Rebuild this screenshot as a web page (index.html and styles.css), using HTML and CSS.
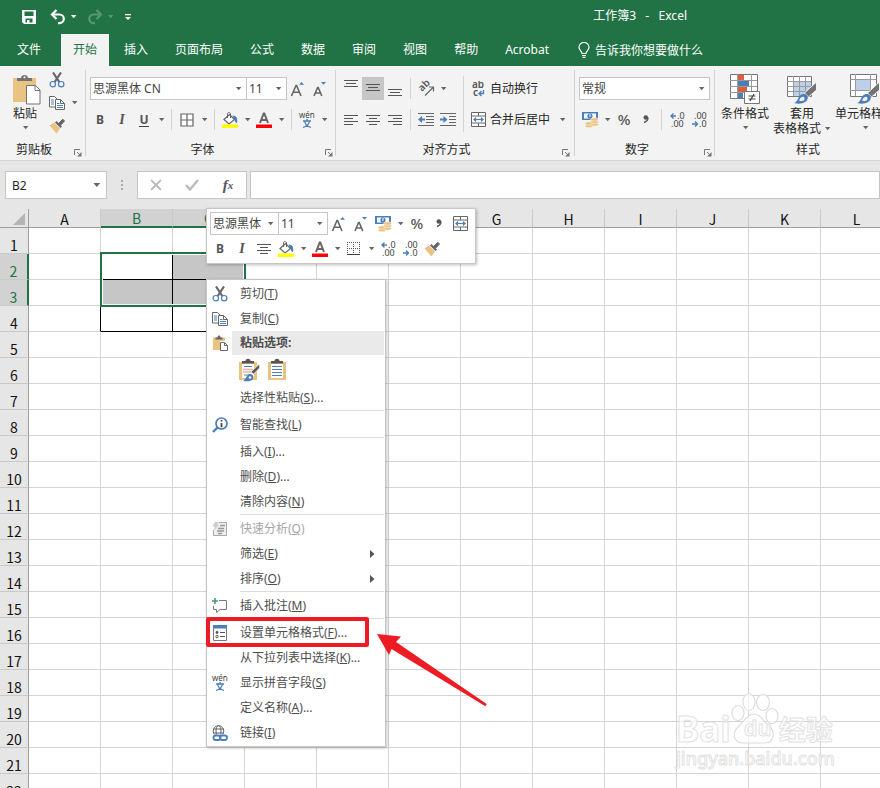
FILE: index.html
```html
<!DOCTYPE html>
<html lang="zh-CN">
<head>
<meta charset="utf-8">
<title>工作簿3 - Excel</title>
<link rel="stylesheet" href="styles.css">
</head>
<body>
<svg class="sprite" aria-hidden="true">
  <symbol id="i-caret" viewBox="0 0 7 4"><path d="M1 0h5.400L3.700 3.200z" fill="currentColor"/></symbol>
  <symbol id="i-save" viewBox="0 0 16 16"><path fill="#fff" fill-rule="evenodd" d="M1 1h14v14H3l-2-2zM3.500 2.500v4.500h9V2.500zM4.500 9.500V13.500H6V11h2.500v2.500h3v-4z"/></symbol>
  <symbol id="i-undo" viewBox="0 0 16 16"><path d="M2 5.500h7.500a4.300 4.300 0 0 1 0 8.600H8" fill="none" stroke="currentColor" stroke-width="2.200"/><path d="M6.500 1L2 5.500 6.500 10" fill="none" stroke="currentColor" stroke-width="2.200"/></symbol>
  <symbol id="i-redo" viewBox="0 0 16 16"><path d="M14 5.500H6.500a4.300 4.300 0 0 0 0 8.600H8" fill="none" stroke="currentColor" stroke-width="2.200"/><path d="M9.500 1L14 5.500 9.500 10" fill="none" stroke="currentColor" stroke-width="2.200"/></symbol>
  <symbol id="i-custom" viewBox="0 0 8 8"><path d="M1 1h6v1.300H1zM1 4h6L4 7z" fill="#fff"/></symbol>
  <symbol id="i-bulb" viewBox="0 0 12 16"><path d="M4 11.500C4 9 1 8.500 1 5.200a5 4.700 0 0 1 10 0C11 8.500 8 9 8 11.500zM4 13.500h4M4.500 15.400h3" fill="none" stroke="#fff" stroke-width="1.200"/></symbol>

  <symbol id="i-paste-big" viewBox="0 0 34 31"><path d="M5 4h23v7H18v17H5z" fill="#eac282"/><path d="M9 7V4h4c0-4 7-4 7 0h4v3z" fill="#737373"/><circle cx="16.500" cy="3.300" r="1.100" fill="#f3f3f3"/><path d="M18.500 11.500h9l4.500 4.500v14H18.500z" fill="#fff" stroke="#737373"/><path d="M27 11.500V16.500h5" fill="none" stroke="#737373"/></symbol>
  <symbol id="i-paste" viewBox="0 0 16 16"><path d="M1 2.500h12V6H8v9H1z" fill="#eac282"/><path d="M3.500 4.500V2.500h2c0-2.600 3-2.600 3 0h2v2z" fill="#666"/><path d="M8.500 7.500h4l3 3v5h-7z" fill="#fff" stroke="#666"/><path d="M12.500 7.500v3h3" fill="none" stroke="#666"/></symbol>
  <symbol id="i-cut" viewBox="0 0 16 16"><path d="M4 .500L10.300 10M12 .500L5.700 10" stroke="#666" stroke-width="2.200" fill="none"/><circle cx="3.800" cy="12.200" r="2.700" fill="none" stroke="#4a7ebb" stroke-width="1.200"/><circle cx="12.200" cy="12.200" r="2.700" fill="none" stroke="#4a7ebb" stroke-width="1.200"/></symbol>
  <symbol id="i-copy" viewBox="0 0 16 16"><path d="M.500 1.500h5L8 4v8H.500z" fill="#fff" stroke="#666"/><path d="M2 5h3M2 7h3M2 9h3" stroke="#4a7ebb"/><path d="M6.500 4.500h5l4 4v6h-9z" fill="#fff" stroke="#666"/><path d="M11.500 4.500v4h4" fill="none" stroke="#666"/><path d="M8 8.500h2.500M8 10.500h6M8 12.500h6" stroke="#4a7ebb"/></symbol>
  <symbol id="i-brush" viewBox="0 0 16 16"><path d="M.500 7.500L5 4.500l6 6-3.500 5z" fill="#eac282"/><path d="M6 4.500l1.500-1.500 5.500 5.500-1.500 1.500z" fill="#666"/><path d="M9.500 5.500L13.800 1.200 15.500 3 11.500 7.300z" fill="#666" stroke="#666"/></symbol>
  <symbol id="i-launch" viewBox="0 0 8 8"><path d="M.500 6V.500H6" fill="none" stroke="#777"/><path d="M3 3l3 3" stroke="#777"/><path d="M7.500 3v4.500H3z" fill="#777"/></symbol>
  <symbol id="i-grow" viewBox="0 0 16 16"><path d="M1.500 15L6 4.500h.6L11 15M3 11.300h6.600" fill="none" stroke="#666" stroke-width="1.600"/><path d="M9 3.800h5L11.500 1z" fill="#4a7ebb"/></symbol>
  <symbol id="i-shrink" viewBox="0 0 16 16"><path d="M2 15L5.600 6.500h.6L9.800 15M3.300 12h5.300" fill="none" stroke="#666" stroke-width="1.600"/><path d="M9 1h5L11.500 3.800z" fill="#4a7ebb"/></symbol>
  <symbol id="i-borders" viewBox="0 0 14 14"><path d="M1 1h12v12H1zM7 1v12M1 7h12" fill="#fff" stroke="#666" stroke-width="1.200"/></symbol>
  <symbol id="i-noborders" viewBox="0 0 14 14"><path d="M.500 0v12M6.500 0v12M12.500 0v12M0 .500h13M0 6.500h13" fill="none" stroke="#555" stroke-dasharray="1 1"/><path d="M0 12.500h13" stroke="#444"/></symbol>
  <symbol id="i-fill" viewBox="0 0 16 16"><path d="M2 7.500L7.500 2.500 12.500 7.500 7 12z" fill="#fff" stroke="#666" stroke-width="1.200"/><path d="M5.500 6V2c0-2 3-2 3 0v4" fill="none" stroke="#666"/><path d="M10.500 3.500c4 0 5.500 3 4.500 7.500-2 0-2-3-3.500-5z" fill="#4a7ebb"/><path d="M0 12.500h16V16H0z" fill="#ff0"/></symbol>
  <symbol id="i-color" viewBox="0 0 16 16"><path d="M4 11L7.700 1.500h.6L12 11M5.400 8h5.300" fill="none" stroke="#666" stroke-width="2"/><path d="M0 12.500h16V16H0z" fill="#f00"/></symbol>
  <symbol id="i-left" viewBox="0 0 14 14"><path d="M0 2.500h14M0 5.500h9M0 8.500h14M0 11.500h9" stroke="#555"/></symbol>
  <symbol id="i-center" viewBox="0 0 14 14"><path d="M0 2.500h14M3 5.500h8M0 8.500h14M3 11.500h8" stroke="#555"/></symbol>
  <symbol id="i-right" viewBox="0 0 14 14"><path d="M0 2.500h14M5 5.500h9M0 8.500h14M5 11.500h9" stroke="#555"/></symbol>
  <symbol id="i-top" viewBox="0 0 14 17"><path d="M0 .500h14M2 3.500h10M0 6.500h14" stroke="#555"/></symbol>
  <symbol id="i-middle" viewBox="0 0 14 17"><path d="M0 4.500h14M2 7.500h10M0 10.500h14" stroke="#555"/></symbol>
  <symbol id="i-bottom" viewBox="0 0 14 17"><path d="M0 9.500h14M2 12.500h10M0 15.500h14" stroke="#555"/></symbol>
  <symbol id="i-turn" viewBox="0 0 17 17"><path d="M7 15.500L15 7.500M11 7h4.500v4.500" fill="none" stroke="#666" stroke-width="1.200"/><text x="0" y="0" transform="translate(4 12) rotate(-45)" font-size="10" font-weight="600" fill="#555">ab</text></symbol>
  <symbol id="i-wrap" viewBox="0 0 16 16"><text x="1" y="7" font-size="10" font-weight="600" fill="#555">ab</text><text x="2" y="15" font-size="10" font-weight="600" fill="#555">c</text><path d="M12.500 9v3.500H8.500M10.500 10l-2.500 2.500 2.500 2.500" fill="none" stroke="#4a7ebb" stroke-width="1.300"/></symbol>
  <symbol id="i-merge" viewBox="0 0 16 16"><path d="M.500.500h14v14H.500zM.500 4h14M.500 11h14M7.500.500V4M7.500 11v3.500" fill="#fff" stroke="#666"/><path d="M3 7.500h9" stroke="#4a7ebb" stroke-width="1.200"/><path d="M2 7.500L5 5v5zM13 7.500L10 5v5z" fill="#4a7ebb"/></symbol>
  <symbol id="i-outdent" viewBox="0 0 16 16"><path d="M0 1.500h16M8 4.500h8M8 7.500h8M8 10.500h8M0 13.500h16" stroke="#666"/><path d="M0 7.500L4 4v2.500h3v2H4V11z" fill="#4a7ebb"/></symbol>
  <symbol id="i-indent" viewBox="0 0 16 16"><path d="M0 1.500h16M9 4.500h7M9 7.500h7M9 10.500h7M0 13.500h16" stroke="#666"/><path d="M7.500 7.500L3.500 4v2.500H0v2h3.500V11z" fill="#4a7ebb"/></symbol>
  <symbol id="i-wen" viewBox="0 0 18 18"><text x="1" y="7" font-size="8" fill="#444">wén</text><path d="M5 10h8M9 8v2M6.500 10c.5 3 3 5.500 6.500 6.500M11.500 10c-.5 3-3 5.500-6.500 6.500" fill="none" stroke="#4a7ebb" stroke-width="1.300"/></symbol>
  <symbol id="i-money" viewBox="0 0 17 16"><path d="M0 0h16v8H0z" fill="#4a7ebb"/><path d="M2 1.500h12v5H2z" fill="#fff"/><circle cx="8" cy="4" r="2.600" fill="#4a7ebb"/><path d="M8 2v3" stroke="#fff"/><g fill="#eac282" stroke="#f7efdf" stroke-width=".7"><ellipse cx="7" cy="14" rx="3.800" ry="1.700"/><ellipse cx="7" cy="11.500" rx="3.800" ry="1.700"/><ellipse cx="12.500" cy="12.500" rx="3.800" ry="1.700"/><ellipse cx="12.500" cy="10" rx="3.800" ry="1.700"/><ellipse cx="12.500" cy="7.500" rx="3.800" ry="1.700"/></g></symbol>
  <symbol id="i-comma" viewBox="0 0 8 12"><circle cx="3.800" cy="3.500" r="2.300" fill="#555"/><path d="M6 3.500C6 6 5 7.500 2 8.500" fill="none" stroke="#555" stroke-width="1.400"/></symbol>
  <symbol id="i-incdec" viewBox="0 0 16 16"><text x="8" y="7" font-size="9" fill="#444">.0</text><text x="2" y="15" font-size="9" fill="#444">.00</text><path d="M7 4H2M4.500 1.500L2 4l2.500 2.500" fill="none" stroke="#4a7ebb" stroke-width="1.400"/></symbol>
  <symbol id="i-decdec" viewBox="0 0 16 16"><text x="3" y="7" font-size="9" fill="#444">.00</text><text x="8" y="15" font-size="9" fill="#444">.0</text><path d="M1 12h5.500M4 9.500L6.500 12 4 14.500" fill="none" stroke="#4a7ebb" stroke-width="1.400"/></symbol>
  <symbol id="i-cond" viewBox="0 0 30 31"><path d="M.500.500h27v24H.500z" fill="#fff" stroke="#777"/><path d="M7.500 0v24M21.500 0v24M0 6.500h27M0 12.500h27M0 18.500h27" stroke="#999"/><path d="M8 1h6v5H8zM8 13h9v5H8z" fill="#d8613c"/><path d="M8 7h11v5H8zM8 19h5v5H8z" fill="#4a7ebb"/><path d="M14.500 17.500h15v12h-15z" fill="#fff" stroke="#777"/><path d="M18.500 22h7M18.500 25h7M24 20l-4 7" stroke="#444" stroke-width="1.200"/></symbol>
  <symbol id="i-tstyle" viewBox="0 0 30 31"><path d="M.500 2.500h24v20H.500z" fill="#fff" stroke="#777"/><path d="M7 8h17v14H7z" fill="#bdd0e9"/><path d="M6.500 2v20M12.500 2v20M18.500 2v20M0 7.500h24M0 12.500h24M0 17.500h24" stroke="#999"/><use href="#i-pen"/></symbol>
  <symbol id="i-cstyle" viewBox="0 0 30 31"><path d="M.500.500h26v22H.500z" fill="#fff" stroke="#777"/><path d="M5.500 0v22M20.500 0v22M0 5.500h26M0 16.500h26" stroke="#999"/><path d="M6 6h14v10H6z" fill="#bdd0e9"/><use href="#i-pen"/></symbol>
  <g id="i-pen"><path d="M29.500 8v8l-8 7-4-4z" fill="#737373" stroke="#f3f3f3"/><path d="M7 29c4 0 4-9 9-9 6-.5 6 6 2 8-3 2-7 2-11 1z" fill="#4a7ebb"/><path d="M12.500 25.500c1.500-3.500 5-3.500 5-1s-2 2.500-5 2.500z" fill="#f3f3f3"/></g>

  <symbol id="i-keep" viewBox="0 0 22 24"><path d="M1 4h18v18H1z" fill="#eac282"/><path d="M4 6h12v14H4z" fill="#fff"/><path d="M4 5.500V3h3.500C7.500 0 12.500 0 12.500 3H16v2.500z" fill="#555"/><path d="M6 8.500h8M6 17h5" stroke="#4a7ebb"/><path d="M5.500 11.500h9M5.500 14h9" stroke="#d8613c" stroke-width="1.600" stroke-dasharray="1 1"/><path d="M21.500 6v4l-6 6-2.500-2z" fill="#555" stroke="#fff" stroke-width=".6"/><path d="M5 23c3-1 3.500-7 7-7s4.500 4 2 6c-2 1.500-5.500 1.500-9 1z" fill="#4a7ebb"/><circle cx="12" cy="19.500" r="1.300" fill="#fff"/></symbol>
  <symbol id="i-values" viewBox="0 0 22 24"><path d="M2 4h18v18H2z" fill="#eac282"/><path d="M5 6h12v14H5z" fill="#fff"/><path d="M5 5.500V3h3.500C8.500 0 13.500 0 13.500 3H17v2.500z" fill="#555"/><path d="M6 8.500h10M6 11.500h10M6 14.500h10M6 17.500h10" stroke="#4a7ebb"/></symbol>
  <symbol id="i-lookup" viewBox="0 0 16 16"><circle cx="9.500" cy="6.500" r="5.500" fill="#fff" stroke="#4a7ebb" stroke-width="1.700"/><path d="M5.500 10.500L1 15" stroke="#4a7ebb" stroke-width="2.400"/><path d="M9.500 3v1.600M9.500 6v4.200" stroke="#444" stroke-width="1.800"/></symbol>
  <symbol id="i-quick" viewBox="0 0 16 16"><path d="M7 1.500h7.500v13h-13V9" fill="#eee" stroke="#aaa"/><path d="M8 4.500h5M6 7.500h6M5 10h7M6 12.500h4" stroke="#999" stroke-width="1.500"/><path d="M3 1h4L5 4h2L1 10l2-4.500H.500z" fill="#ccc"/></symbol>
  <symbol id="i-note" viewBox="0 0 16 16"><path d="M7 2.500h7.500v9H8l-3.500 3v-3h-3V8" fill="none" stroke="#777"/><path d="M3 0v6M0 3h6" stroke="#4f9a78" stroke-width="1.600"/></symbol>
  <symbol id="i-format" viewBox="0 0 16 16"><path d="M1.500 1.500h13v14h-13z" fill="#fff" stroke="#777"/><path d="M1 0h14v3.500H1z" fill="#4a7ebb"/><path d="M8 7.500h5M8 11.500h5" stroke="#555"/><circle cx="5" cy="7.500" r="1.400" fill="#555"/><circle cx="5" cy="11.500" r="1.200" fill="#fff" stroke="#555"/></symbol>
  <symbol id="i-link" viewBox="0 0 16 16"><g fill="none" stroke="#666"><circle cx="6.500" cy="6" r="5.300"/><ellipse cx="6.500" cy="6" rx="2.500" ry="5.300"/><path d="M1 4h11M1 8h11"/></g><path d="M1 9.500h15V16H1z" fill="#fff"/><rect x="1.500" y="10.500" width="7" height="4.500" rx="2.200" fill="none" stroke="#4a7ebb" stroke-width="1.800"/><rect x="8" y="10.500" width="7" height="4.500" rx="2.200" fill="none" stroke="#4a7ebb" stroke-width="1.800"/></symbol>
  <symbol id="i-sub" viewBox="0 0 5 8"><path d="M0 0v8l4.500-4z" fill="#555"/></symbol>
  <symbol id="i-cancel" viewBox="0 0 14 14"><path d="M2 2l10 10M12 2L2 12" stroke="#bbb" stroke-width="1.800"/></symbol>
  <symbol id="i-check" viewBox="0 0 14 14"><path d="M1 7l4 4.500L13 2" fill="none" stroke="#bbb" stroke-width="2.400"/></symbol>
</svg>

<header class="top">
  <div class="titlebar">
    <div class="quick">
      <button class="tb" aria-label="保存"><svg width="16" height="16"><use href="#i-save"/></svg></button>
      <button class="tb split" aria-label="撤消"><svg width="16" height="16"><use href="#i-undo"/></svg><svg class="caret"><use href="#i-caret"/></svg></button>
      <button class="tb split" aria-label="恢复" disabled><svg width="16" height="16"><use href="#i-redo"/></svg><svg class="caret"><use href="#i-caret"/></svg></button>
      <button class="tb" aria-label="自定义"><svg width="8" height="8"><use href="#i-custom"/></svg></button>
    </div>
    <h1>工作簿3&nbsp;&nbsp; -&nbsp;&nbsp; Excel</h1>
  </div>
  <nav class="tabs">
    <button class="file">文件</button><button class="active">开始</button><button>插入</button><button>页面布局</button><button>公式</button><button>数据</button><button>审阅</button><button>视图</button><button>帮助</button><button>Acrobat</button>
    <button class="tell"><svg width="12" height="16"><use href="#i-bulb"/></svg>告诉我你想要做什么</button>
  </nav>
</header>

<section class="ribbon">
  <div class="group clipboard">
    <div class="tools">
      <button class="big"><svg width="34" height="31"><use href="#i-paste-big"/></svg><span>粘贴</span><svg class="caret"><use href="#i-caret"/></svg></button>
      <div class="stack">
        <div class="row"><button class="ic" aria-label="剪切"><svg width="16" height="16"><use href="#i-cut"/></svg></button></div>
        <div class="row"><button class="ic" aria-label="复制"><svg width="16" height="16"><use href="#i-copy"/></svg></button><button class="drop" aria-label="复制选项"><svg class="caret"><use href="#i-caret"/></svg></button></div>
        <div class="row"><button class="ic" aria-label="格式刷"><svg width="16" height="16"><use href="#i-brush"/></svg></button></div>
      </div>
    </div>
    <div class="caption">剪贴板<button class="launch" aria-label="剪贴板设置"><svg width="8" height="8"><use href="#i-launch"/></svg></button></div>
  </div>

  <div class="group font">
    <div class="rows">
      <div class="row first">
        <div class="combo wide"><select aria-label="字体"><option>思源黑体 CN</option></select><svg class="caret"><use href="#i-caret"/></svg></div>
        <div class="combo size"><select aria-label="字号"><option>11</option></select><svg class="caret"><use href="#i-caret"/></svg></div>
        <button class="ic" aria-label="增大字号"><svg width="16" height="16"><use href="#i-grow"/></svg></button>
        <button class="ic" aria-label="减小字号"><svg width="16" height="16"><use href="#i-shrink"/></svg></button>
      </div>
      <div class="row">
        <button class="ic"><b>B</b></button><button class="ic"><i>I</i></button><button class="ic"><b class="ul">U</b></button><button class="drop" aria-label="下划线"><svg class="caret"><use href="#i-caret"/></svg></button>
        <span class="sep"></span>
        <button class="ic" aria-label="边框"><svg width="14" height="14"><use href="#i-borders"/></svg></button><button class="drop" aria-label="边框选项"><svg class="caret"><use href="#i-caret"/></svg></button>
        <span class="sep"></span>
        <button class="ic" aria-label="填充颜色"><svg width="16" height="16"><use href="#i-fill"/></svg></button><button class="drop" aria-label="填充选项"><svg class="caret"><use href="#i-caret"/></svg></button>
        <button class="ic" aria-label="字体颜色"><svg width="16" height="16"><use href="#i-color"/></svg></button><button class="drop" aria-label="颜色选项"><svg class="caret"><use href="#i-caret"/></svg></button>
        <span class="sep"></span>
        <button class="ic" aria-label="拼音"><svg width="18" height="18"><use href="#i-wen"/></svg></button><button class="drop" aria-label="拼音选项"><svg class="caret"><use href="#i-caret"/></svg></button>
      </div>
    </div>
    <div class="caption">字体<button class="launch" aria-label="字体设置"><svg width="8" height="8"><use href="#i-launch"/></svg></button></div>
  </div>

  <div class="group align">
    <div class="cols">
      <div class="rows">
        <div class="row">
          <button class="ic" aria-label="顶端对齐"><svg width="14" height="17"><use href="#i-top"/></svg></button><button class="ic on" aria-label="垂直居中"><svg width="14" height="17"><use href="#i-middle"/></svg></button><button class="ic" aria-label="底端对齐"><svg width="14" height="17"><use href="#i-bottom"/></svg></button>
          <span class="sep"></span>
          <button class="ic" aria-label="方向"><svg width="17" height="17"><use href="#i-turn"/></svg></button><button class="drop" aria-label="方向选项"><svg class="caret"><use href="#i-caret"/></svg></button>
        </div>
        <div class="row">
          <button class="ic" aria-label="左对齐"><svg width="14" height="14"><use href="#i-left"/></svg></button><button class="ic" aria-label="居中"><svg width="14" height="14"><use href="#i-center"/></svg></button><button class="ic" aria-label="右对齐"><svg width="14" height="14"><use href="#i-right"/></svg></button>
          <span class="sep"></span>
          <button class="ic" aria-label="减少缩进"><svg width="16" height="16"><use href="#i-outdent"/></svg></button><button class="ic" aria-label="增加缩进"><svg width="16" height="16"><use href="#i-indent"/></svg></button>
        </div>
      </div>
      <span class="sep tall"></span>
      <div class="rows">
        <div class="row"><button class="text"><span class="ic"><svg width="16" height="16"><use href="#i-wrap"/></svg></span>自动换行</button></div>
        <div class="row"><button class="text"><span class="ic"><svg width="16" height="16"><use href="#i-merge"/></svg></span>合并后居中</button><button class="drop far" aria-label="合并选项"><svg class="caret"><use href="#i-caret"/></svg></button></div>
      </div>
    </div>
    <div class="caption">对齐方式<button class="launch" aria-label="对齐设置"><svg width="8" height="8"><use href="#i-launch"/></svg></button></div>
  </div>

  <div class="group number">
    <div class="rows">
      <div class="row"><div class="combo full"><select aria-label="数字格式"><option>常规</option></select><svg class="caret"><use href="#i-caret"/></svg></div></div>
      <div class="row">
        <button class="ic" aria-label="会计格式"><svg width="17" height="16"><use href="#i-money"/></svg></button><button class="drop" aria-label="会计选项"><svg class="caret"><use href="#i-caret"/></svg></button>
        <button class="ic pct">%</button><button class="ic" aria-label="千位分隔"><svg width="8" height="12"><use href="#i-comma"/></svg></button>
        <span class="sep"></span>
        <button class="ic" aria-label="增加小数位"><svg width="16" height="16"><use href="#i-incdec"/></svg></button><button class="ic" aria-label="减少小数位"><svg width="16" height="16"><use href="#i-decdec"/></svg></button>
      </div>
    </div>
    <div class="caption">数字<button class="launch" aria-label="数字设置"><svg width="8" height="8"><use href="#i-launch"/></svg></button></div>
  </div>

  <div class="group styles">
    <div class="tools">
      <button class="big"><svg width="30" height="31"><use href="#i-cond"/></svg><span>条件格式</span><svg class="caret"><use href="#i-caret"/></svg></button>
      <button class="big"><svg width="30" height="31"><use href="#i-tstyle"/></svg><span>套用</span><span class="line">表格格式<svg class="caret"><use href="#i-caret"/></svg></span></button>
      <button class="big"><svg width="30" height="31"><use href="#i-cstyle"/></svg><span>单元格样式</span><svg class="caret"><use href="#i-caret"/></svg></button>
    </div>
    <div class="caption center">样式</div>
  </div>
</section>

<section class="formula">
  <div class="namebox"><input aria-label="名称框" value="B2"><svg width="9" height="5" viewBox="0 0 7 4"><use href="#i-caret"/></svg></div>
  <span class="dots"></span>
  <div class="fxbox">
    <button aria-label="取消"><svg width="14" height="14"><use href="#i-cancel"/></svg></button>
    <button aria-label="输入"><svg width="14" height="14"><use href="#i-check"/></svg></button>
    <button class="fx">f<sub>x</sub></button>
  </div>
  <input class="edit" aria-label="编辑栏">
</section>

<main class="sheet">
  <table>
    <thead><tr id="heads"><th class="corner"><svg width="12" height="12" viewBox="0 0 12 12"><path d="M12 0v12H0z" fill="#b4b4b4"/></svg></th></tr></thead>
    <tbody id="cells"></tbody>
  </table>
</main>

<div class="mini">
  <div class="row first">
    <div class="combo mfont"><select aria-label="字体"><option>思源黑体</option></select><svg class="caret"><use href="#i-caret"/></svg></div>
    <div class="combo msize"><select aria-label="字号"><option>11</option></select><svg class="caret"><use href="#i-caret"/></svg></div>
    <button class="ic" aria-label="增大字号"><svg width="16" height="16"><use href="#i-grow"/></svg></button><button class="ic" aria-label="减小字号"><svg width="16" height="16"><use href="#i-shrink"/></svg></button>
    <button class="ic" aria-label="会计格式"><svg width="17" height="16"><use href="#i-money"/></svg></button><button class="drop" aria-label="会计选项"><svg class="caret"><use href="#i-caret"/></svg></button>
    <button class="ic pct">%</button><button class="ic" aria-label="千位分隔"><svg width="8" height="12"><use href="#i-comma"/></svg></button><button class="ic" aria-label="合并"><svg width="16" height="16"><use href="#i-merge"/></svg></button>
  </div>
  <div class="row">
    <button class="ic"><b>B</b></button><button class="ic"><i>I</i></button><button class="ic" aria-label="居中"><svg width="14" height="14"><use href="#i-center"/></svg></button>
    <button class="ic" aria-label="填充颜色"><svg width="16" height="16"><use href="#i-fill"/></svg></button><button class="drop" aria-label="填充选项"><svg class="caret"><use href="#i-caret"/></svg></button>
    <button class="ic" aria-label="字体颜色"><svg width="16" height="16"><use href="#i-color"/></svg></button><button class="drop" aria-label="颜色选项"><svg class="caret"><use href="#i-caret"/></svg></button>
    <button class="ic" aria-label="边框"><svg width="14" height="14"><use href="#i-noborders"/></svg></button><button class="drop" aria-label="边框选项"><svg class="caret"><use href="#i-caret"/></svg></button>
    <button class="ic" aria-label="增加小数位"><svg width="16" height="16"><use href="#i-incdec"/></svg></button><button class="ic" aria-label="减少小数位"><svg width="16" height="16"><use href="#i-decdec"/></svg></button><button class="ic" aria-label="格式刷"><svg width="16" height="16"><use href="#i-brush"/></svg></button>
  </div>
</div>

<div class="menu" role="menu">
  <button role="menuitem"><span class="mi"><svg width="16" height="16"><use href="#i-cut"/></svg></span>剪切(<u>T</u>)</button>
  <button role="menuitem"><span class="mi"><svg width="16" height="16"><use href="#i-copy"/></svg></span>复制(<u>C</u>)</button>
  <div class="heading"><span class="mi"><svg width="16" height="16"><use href="#i-paste"/></svg></span><strong>粘贴选项:</strong></div>
  <div class="pastes"><button aria-label="保留源格式"><svg width="22" height="24"><use href="#i-keep"/></svg></button><button aria-label="值"><svg width="22" height="24"><use href="#i-values"/></svg></button></div>
  <button role="menuitem"><span class="mi"></span>选择性粘贴(<u>S</u>)...</button>
  <hr>
  <button role="menuitem"><span class="mi"><svg width="16" height="16"><use href="#i-lookup"/></svg></span>智能查找(<u>L</u>)</button>
  <hr>
  <button role="menuitem"><span class="mi"></span>插入(<u>I</u>)...</button>
  <button role="menuitem"><span class="mi"></span>删除(<u>D</u>)...</button>
  <button role="menuitem"><span class="mi"></span>清除内容(<u>N</u>)</button>
  <hr>
  <button role="menuitem" disabled><span class="mi"><svg width="16" height="16"><use href="#i-quick"/></svg></span>快速分析(<u>Q</u>)</button>
  <button role="menuitem"><span class="mi"></span>筛选(<u>E</u>)<svg class="sub" width="5" height="8"><use href="#i-sub"/></svg></button>
  <button role="menuitem"><span class="mi"></span>排序(<u>O</u>)<svg class="sub" width="5" height="8"><use href="#i-sub"/></svg></button>
  <hr>
  <button role="menuitem"><span class="mi"><svg width="16" height="16"><use href="#i-note"/></svg></span>插入批注(<u>M</u>)</button>
  <hr>
  <button role="menuitem" class="marked"><span class="mi"><svg width="16" height="16"><use href="#i-format"/></svg></span>设置单元格格式(<u>F</u>)...</button>
  <button role="menuitem"><span class="mi"></span>从下拉列表中选择(<u>K</u>)...</button>
  <button role="menuitem"><span class="mi"><svg width="18" height="18"><use href="#i-wen"/></svg></span>显示拼音字段(<u>S</u>)</button>
  <button role="menuitem"><span class="mi"></span>定义名称(<u>A</u>)...</button>
  <button role="menuitem"><span class="mi"><svg width="16" height="16"><use href="#i-link"/></svg></span>链接(<u>I</u>)</button>
</div>

<svg class="arrow" width="112" height="76" viewBox="0 0 112 76"><path d="M1 3L25 5.500 20 11 110 72.500Q111.500 74 109 75L15.500 18 13 24z" fill="#ed1c24"/></svg>

<div class="watermark">
  <div class="brand"><span class="bai">Bai</span><span class="paw"><svg width="48" height="52" viewBox="0 0 48 52"><g fill="#fff" fill-opacity=".7" stroke="#ddd" stroke-width="1.200"><ellipse cx="7" cy="21" rx="6" ry="7.500"/><ellipse cx="18" cy="10" rx="6" ry="8.500"/><ellipse cx="32" cy="10.500" rx="6.500" ry="8"/><ellipse cx="41" cy="24" rx="6" ry="7.500"/><path d="M23 22c7 0 9 7 14 11 9 7 5 18-3 18H12c-9 0-12-10-4-17 6-5 8-12 15-12z"/></g></svg><span class="du">du</span></span><span class="jy">经验</span></div>
  <div class="url">jingyan.baidu.com</div>
</div>
<script src="script.js"></script>
</body>
</html>
```
FILE: styles.css
```css
*, *::before, *::after { box-sizing: border-box; }

body {
  margin: 0;
  position: relative;
  height: 100vh;
  overflow: hidden;
  display: flex;
  flex-direction: column;
  background: #fff;
  color: #262626;
  font: 12px/15px "Noto Sans", "Noto Sans CJK SC", sans-serif;
}

button, input, select {
  font: inherit;
  color: inherit;
  border: 0;
  padding: 0;
  margin: 0;
  background: none;
  outline: 0;
  border-radius: 0;
}

button { white-space: nowrap; }
svg { display: block; flex: none; }
.sprite { display: none; }
.caret { width: 7px; height: 4px; color: #666; }

/* Title bar and tabs */
.top { background: #217346; color: #fff; flex: none; }
.titlebar { display: flex; align-items: center; justify-content: space-between; height: 34px; padding: 0 193px 0 21px; }
.titlebar h1 { margin: 0; padding-bottom: 4px; font-size: 12px; font-weight: 400; }
.quick { display: flex; align-items: center; gap: 10px; }
.quick .tb { display: flex; align-items: center; gap: 4px; }
.quick .tb:first-child { margin-right: 3px; }
.quick .caret { color: #fff; }
.quick .split:disabled { opacity: .25; color: #fff; }
.tabs { display: flex; gap: 3px; height: 32px; padding-left: 5px; }
.tabs button { padding: 0 12px 2px; }
.tabs .file { margin-right: 5px; }
.tabs .active { background: #f3f3f3; color: #217346; }
.tabs .tell { display: flex; align-items: center; gap: 5px; padding: 0 14px; }

/* Ribbon */
.ribbon { display: flex; flex: none; height: 95px; background: #f3f3f3; border-bottom: 1px solid #d2d2d2; overflow: hidden; }
.group { position: relative; display: flex; flex-direction: column; justify-content: space-between; flex: none; padding-bottom: 2px; }
.group::after { content: ""; position: absolute; right: 0; top: 4px; bottom: 4px; width: 1px; background: #d2d2d2; }
.clipboard { padding-left: 8px; padding-right: 6px; }
.font { padding-left: 3px; padding-right: 5px; }
.align { padding-left: 4px; padding-right: 7px; }
.number { padding-left: 4px; padding-right: 5px; }
.styles { padding-left: 6px; padding-right: 7px; }
.caption { position: relative; text-align: center; padding-right: 15px; line-height: 16px; }
.clipboard .caption { padding-right: 20px; }
.caption.center { padding-right: 0; }
.launch { position: absolute; right: -2px; bottom: 1px; }
.tools { display: flex; gap: 4px; }
.stack { display: flex; flex-direction: column; padding-top: 2px; }
.rows { display: flex; flex-direction: column; gap: 8px; padding-top: 11px; }
.cols { display: flex; }
.row { display: flex; align-items: center; height: 23px; }
.font .first, .mini .first { padding-left: 1px; }
.ic { display: flex; align-items: center; justify-content: center; width: 22px; height: 23px; flex: none; color: #555; }
.ic b, .ic i { font-size: 12px; font-weight: 700; line-height: 15px; }
.ic i { font-family: "Liberation Serif", serif; font-size: 14px; }
.ic .ul { border-bottom: 1px solid #444; line-height: 13px; }
.ic.on { background: #c6c6c6; }
.pct { font-size: 15px; font-weight: 500; }
.drop { display: flex; align-items: center; justify-content: center; width: 12px; height: 23px; flex: none; }
.drop.far { margin-left: 6px; }
.sep { width: 1px; height: 21px; margin: 0 4px; background: #d2d2d2; flex: none; }
.sep.tall { height: 56px; margin-top: 10px; }
.text { display: flex; align-items: center; }
.big { display: flex; flex-direction: column; align-items: center; padding-top: 8px; }
.big span { line-height: 15px; }
.big > svg:first-child { margin-bottom: 1px; }
.big > .caret { margin-top: 5px; }
.big .line { display: flex; align-items: center; gap: 3px; }

.combo { position: relative; display: flex; height: 23px; background: #fff; border: 1px solid #c6c6c6; flex: none; }
.combo select { width: 100%; padding: 0 12px 0 2px; appearance: none; color: #444; }
.combo .caret { position: absolute; right: 4px; top: 9px; pointer-events: none; }
.wide { width: 157px; }
.size { width: 41px; margin-left: -1px; }
.full { width: 131px; }

/* Formula bar */
.formula { display: flex; align-items: center; flex: none; height: 48px; padding-left: 5px; background: #e6e6e6; }
.namebox, .fxbox, .edit { height: 28px; background: #fff; border: 1px solid #c6c6c6; }
.namebox { display: flex; align-items: center; width: 102px; padding: 0 5px 0 6px; color: #666; }
.namebox input { width: 100%; color: #262626; }
.dots { width: 2px; height: 11px; margin: 0 14px; background: repeating-linear-gradient(#aaa 0 2px, transparent 2px 4px); }
.fxbox { display: flex; width: 110px; }
.fxbox button { display: flex; align-items: center; justify-content: center; flex: 1; }
.fxbox .fx { font: italic 700 15px/15px "Liberation Serif", serif; color: #555; }
.fx sub { font-size: 11px; line-height: 10px; vertical-align: baseline; }
.edit { flex: 1; margin-left: 3px; }

/* Grid */
.sheet { flex: 1; min-height: 0; overflow: hidden; }
table { border-collapse: separate; border-spacing: 0; table-layout: fixed; width: max-content; font: 14px/16px "Noto Sans CJK SC", sans-serif; }
th { font-weight: 400; background: #e6e6e6; padding: 0; color: #111; }
thead th { width: 72px; height: 19px; padding-top: 2px; line-height: 15px; border-right: 1px solid #c9c9c9; border-bottom: 1px solid #9e9e9e; }
thead .corner { width: 29px; border-right-color: #9e9e9e; }
.corner svg { margin: 1px 2px 2px 13px; }
thead .picked { background: #d2d2d2; color: #217346; border-bottom: 2px solid #217346; }
tbody th { height: 26px; padding-top: 9px; border-right: 1px solid #9e9e9e; border-bottom: 1px solid #c9c9c9; }
tbody .picked { background: #d2d2d2; color: #217346; border-right: 2px solid #217346; }
td { padding: 0; border-right: 1px solid #d4d4d4; border-bottom: 1px solid #d4d4d4; }
td.ink-b { border-bottom-color: #000; }
td.ink-r { border-right-color: #000; }
td.shade { background: #c6c6c6; }
td.active { position: relative; }
.selection { position: absolute; left: -1px; top: -2px; width: 146px; height: 55px; border: 2px solid #217346; box-shadow: inset 0 0 0 1px #fff; }

/* Floating toolbar and context menu */
.mini, .menu { position: absolute; left: 206px; background: #fff; border: 1px solid #c6c6c6; box-shadow: 1px 1px 3px rgba(0, 0, 0, .25); }
.mini { top: 208px; padding: 3px 3px 3px 2px; }
.mini .row + .row { margin-top: 2px; }
.mfont { width: 69px; }
.msize { width: 50px; margin-left: -1px; }
.menu { top: 279px; width: 180px; padding: 1px; color: #4d4d4d; }
.menu > button { position: relative; display: flex; align-items: center; width: 100%; height: 25px; }
.menu > button:disabled { color: #a6a6a6; }
.mi { display: flex; align-items: center; justify-content: center; width: 24px; height: 24px; margin-right: 8px; flex: none; }
.menu hr { height: 1px; margin: 0 0 1px 32px; border: 0; background: #dcdcdc; }
.heading { display: flex; align-items: center; height: 24px; }
.heading .mi { margin-right: 0; }
.heading strong { flex: 1; padding-left: 8px; line-height: 24px; background: #eaeaea; }
.pastes { display: flex; align-items: center; gap: 6px; height: 30px; padding-left: 30px; }
.menu .sub { margin-left: auto; margin-right: 9px; }
.menu .marked::after { content: ""; position: absolute; left: -2px; top: -3px; width: 163px; height: 30px; border: 4px solid #ed1c24; border-radius: 2px; }
.arrow { position: absolute; left: 376px; top: 631px; }

/* Watermark */
.watermark { position: absolute; left: 676px; top: 692px; color: rgba(255, 255, 255, .7); -webkit-text-stroke: 1px #e2e2e2; }
.brand { display: flex; align-items: flex-end; height: 52px; }
.bai { font-size: 35px; font-weight: 700; line-height: 30px; }
.paw { position: relative; }
.du { position: absolute; left: 13px; bottom: 6px; font-size: 22px; font-weight: 600; line-height: 22px; }
.jy { font-size: 27px; font-weight: 700; line-height: 28px; }
.url { margin-top: 4px; font-size: 18px; font-weight: 500; line-height: 20px; }
```
FILE: script.js
```js
const letters = "ABCDEFGHIJKL".split("");
const heads = document.getElementById("heads");
const cells = document.getElementById("cells");

for (const letter of letters) {
  const th = document.createElement("th");
  th.textContent = letter;
  if (letter === "B" || letter === "C") th.className = "picked";
  heads.append(th);
}

// Extra classes for the selected range and its drawn borders.
const marks = {
  B2: "active ink-b ink-r", C2: "shade ink-b ink-r",
  B3: "shade ink-b ink-r", C3: "shade ink-b ink-r",
  A4: "ink-r", B4: "ink-b ink-r", C4: "ink-b ink-r"
};

for (let n = 1; n <= 22; n++) {
  const tr = document.createElement("tr");
  const th = document.createElement("th");
  th.textContent = n;
  if (n === 2 || n === 3) th.className = "picked";
  tr.append(th);
  for (const letter of letters) {
    const td = document.createElement("td");
    td.className = marks[letter + n] || "";
    if (letter + n === "B2") {
      const box = document.createElement("div");
      box.className = "selection";
      td.append(box);
    }
    tr.append(td);
  }
  cells.append(tr);
}
```
